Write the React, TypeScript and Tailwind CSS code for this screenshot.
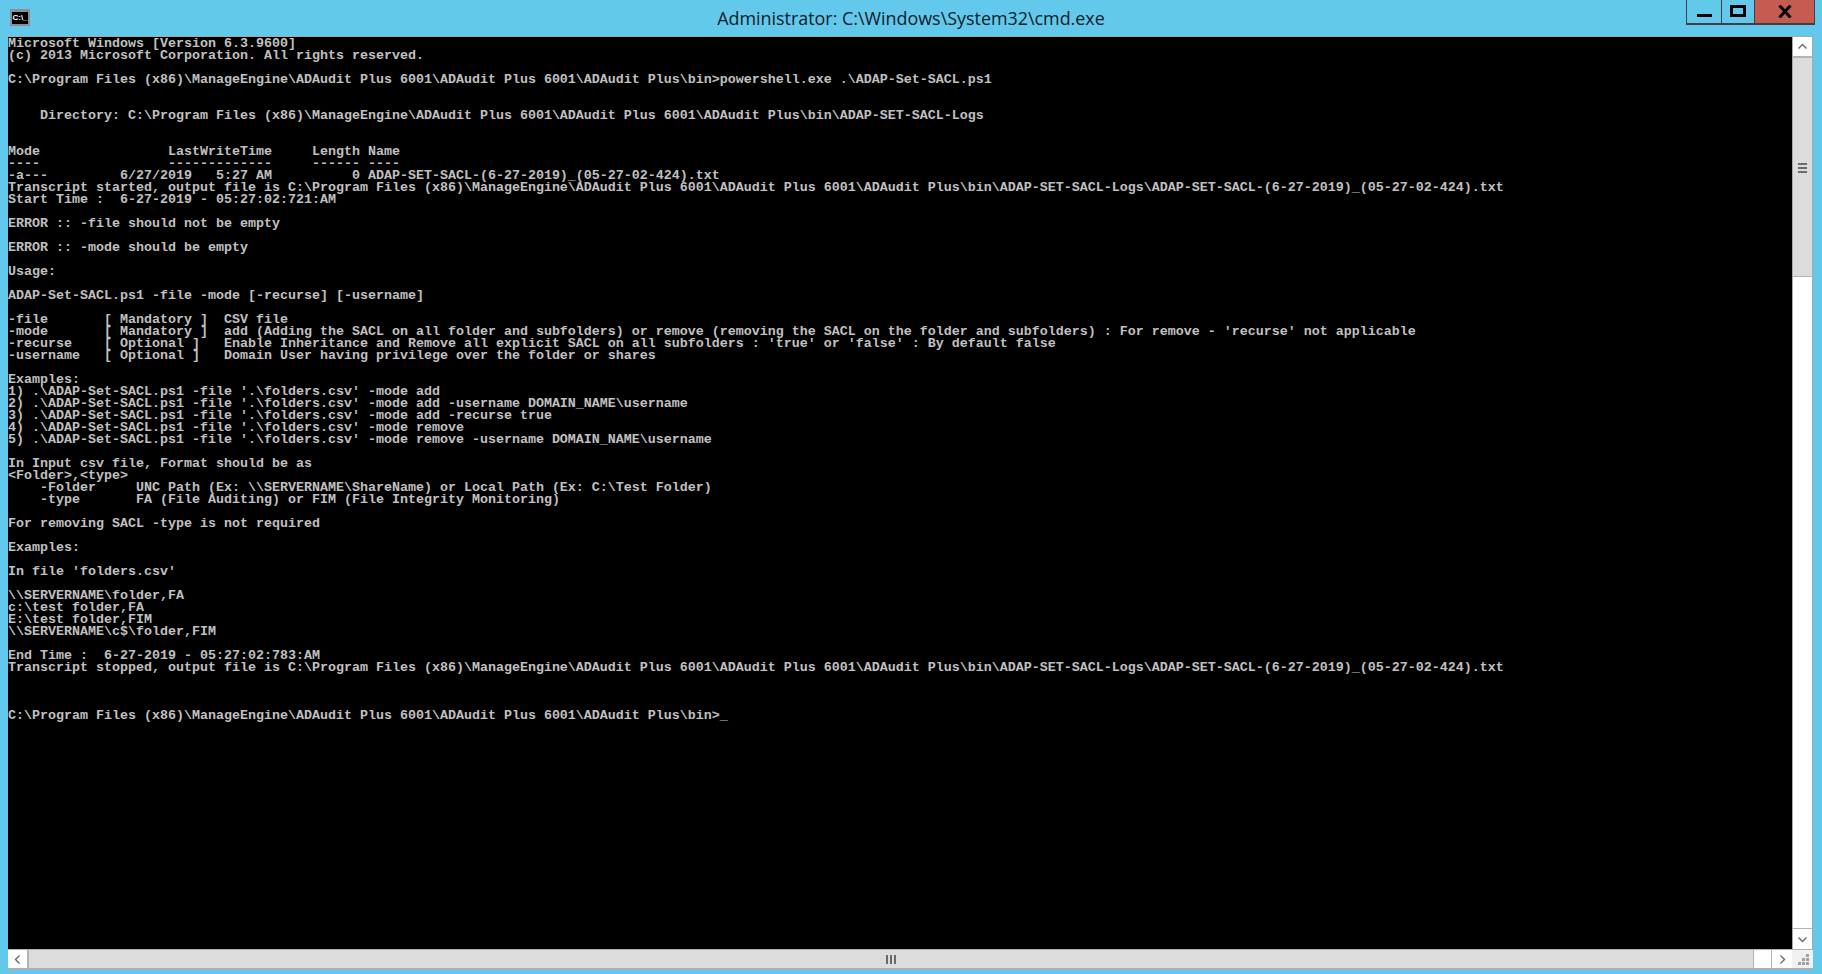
const base = "C:\\Program Files (x86)\\ManageEngine\\ADAudit Plus 6001\\ADAudit Plus 6001\\ADAudit Plus\\bin";
const logFile = "ADAP-SET-SACL-(6-27-2019)_(05-27-02-424).txt";
const ex = ".\\ADAP-Set-SACL.ps1 -file '.\\folders.csv' -mode";

const lines = [
  "Microsoft Windows [Version 6.3.9600]",
  "(c) 2013 Microsoft Corporation. All rights reserved.",
  "",
  `${base}>powershell.exe .\\ADAP-Set-SACL.ps1`,
  "",
  "",
  `    Directory: ${base}\\ADAP-SET-SACL-Logs`,
  "",
  "",
  "Mode                LastWriteTime     Length Name",
  "----                -------------     ------ ----",
  `-a---         6/27/2019   5:27 AM          0 ${logFile}`,
  `Transcript started, output file is ${base}\\ADAP-SET-SACL-Logs\\${logFile}`,
  "Start Time :  6-27-2019 - 05:27:02:721:AM",
  "",
  "ERROR :: -file should not be empty",
  "",
  "ERROR :: -mode should be empty",
  "",
  "Usage:",
  "",
  "ADAP-Set-SACL.ps1 -file -mode [-recurse] [-username]",
  "",
  "-file       [ Mandatory ]  CSV file",
  "-mode       [ Mandatory ]  add (Adding the SACL on all folder and subfolders) or remove (removing the SACL on the folder and subfolders) : For remove - 'recurse' not applicable",
  "-recurse    [ Optional ]   Enable Inheritance and Remove all explicit SACL on all subfolders : 'true' or 'false' : By default false",
  "-username   [ Optional ]   Domain User having privilege over the folder or shares",
  "",
  "Examples:",
  `1) ${ex} add`,
  `2) ${ex} add -username DOMAIN_NAME\\username`,
  `3) ${ex} add -recurse true`,
  `4) ${ex} remove`,
  `5) ${ex} remove -username DOMAIN_NAME\\username`,
  "",
  "In Input csv file, Format should be as",
  "<Folder>,<type>",
  "    -Folder     UNC Path (Ex: \\\\SERVERNAME\\ShareName) or Local Path (Ex: C:\\Test Folder)",
  "    -type       FA (File Auditing) or FIM (File Integrity Monitoring)",
  "",
  "For removing SACL -type is not required",
  "",
  "Examples:",
  "",
  "In file 'folders.csv'",
  "",
  "\\\\SERVERNAME\\folder,FA",
  "c:\\test folder,FA",
  "E:\\test folder,FIM",
  "\\\\SERVERNAME\\c$\\folder,FIM",
  "",
  "End Time :  6-27-2019 - 05:27:02:783:AM",
  `Transcript stopped, output file is ${base}\\ADAP-SET-SACL-Logs\\${logFile}`,
  "",
  "",
  "",
  `${base}>_`,
];

function Chevron({ points }: { points: string }) {
  return (
    <svg width="11" height="11" viewBox="0 0 11 11" fill="none" stroke="#6a6a6a" strokeWidth="1.4">
      <polyline points={points} />
    </svg>
  );
}

function ScrollButton({ points, className }: { points: string; className: string }) {
  return (
    <div className={`flex items-center justify-center bg-white ${className}`}>
      <Chevron points={points} />
    </div>
  );
}

function TitleBar() {
  return (
    <div className="grid h-[36px] grid-cols-[1fr_auto_1fr]">
      <div className="pl-[10px] pt-[9px]">
        <div className="h-[17px] w-[20px] border-[2px] border-t-[3px] border-[#8a8f94] bg-black text-center font-['Liberation_Sans',sans-serif] text-[8px] leading-[11px] font-bold text-white">
          C:\_
        </div>
      </div>
      <div className="pt-[3px] font-['Open_Sans',sans-serif] text-[17.9px] leading-[30px] text-[#10202a]">
        Administrator: C:\Windows\System32\cmd.exe
      </div>
      <div className="flex justify-end pr-[7px]">
        <div className="flex h-[25px] border-x-[1px] border-b-[2px] border-[#404040]">
          <div className="flex w-[35px] justify-center border-r-[1px] border-[#404040] pt-[14px]">
            <div className="h-[3px] w-[15px] bg-black" />
          </div>
          <div className="flex w-[33px] justify-center border-r-[1px] border-[#404040] pt-[5px]">
            <div className="h-[12px] w-[16px] border-[3px] border-black" />
          </div>
          <div className="flex w-[59px] justify-center bg-[#c45c51] pt-[5px]">
            <svg width="14" height="13" viewBox="0 0 14 13" stroke="black" strokeWidth="3">
              <path d="M1.5 0.5 L12.5 12.5 M12.5 0.5 L1.5 12.5" />
            </svg>
          </div>
        </div>
      </div>
    </div>
  );
}

function VerticalScrollbar() {
  return (
    <div className="flex w-[21px] flex-col border-x-[1px] border-[#a8a8a8] bg-white">
      <ScrollButton points="1.5,7.5 5.5,3.5 9.5,7.5" className="h-[21px] border-b-[2px] border-[#b4b4b4]" />
      <div className="flex h-[219px] flex-col items-center gap-[2px] border-b-[1px] border-[#b4b4b4] bg-[#dcdcdc] pt-[105px]">
        <div className="h-[2px] w-[9px] bg-[#6a6a6a]" />
        <div className="h-[2px] w-[9px] bg-[#6a6a6a]" />
        <div className="h-[2px] w-[9px] bg-[#6a6a6a]" />
      </div>
      <div className="flex-1" />
      <ScrollButton points="1.5,3.5 5.5,7.5 9.5,3.5" className="h-[21px] border-t-[1px] border-[#b4b4b4]" />
    </div>
  );
}

function HorizontalScrollbar() {
  return (
    <div className="flex h-[21px] pl-[8px] pr-[9px]">
      <div className="flex flex-1 border-y-[1px] border-b-[2px] border-[#b0b0b0] bg-white">
        <ScrollButton points="7.5,1.5 3.5,5.5 7.5,9.5" className="w-[21px] border-r-[2px] border-[#b4b4b4]" />
        <div className="flex w-[1725px] items-center justify-center gap-[2px] border-r-[1px] border-[#b4b4b4] bg-[#dcdcdc]">
          <div className="h-[9px] w-[2px] bg-[#6a6a6a]" />
          <div className="h-[9px] w-[2px] bg-[#6a6a6a]" />
          <div className="h-[9px] w-[2px] bg-[#6a6a6a]" />
        </div>
        <div className="flex-1" />
        <ScrollButton points="3.5,1.5 7.5,5.5 3.5,9.5" className="w-[21px] border-l-[1px] border-[#b4b4b4]" />
        <div className="flex w-[21px] items-end justify-end bg-[#f0f0f0] pb-[2px] pr-[4px]">
          <svg width="12" height="12" viewBox="0 0 12 12" fill="#a0a0a0">
            <rect x="9" y="0" width="3" height="3" />
            <rect x="5" y="4" width="3" height="3" />
            <rect x="9" y="4" width="3" height="3" />
            <rect x="1" y="8" width="3" height="3" />
            <rect x="5" y="8" width="3" height="3" />
            <rect x="9" y="8" width="3" height="3" />
          </svg>
        </div>
      </div>
    </div>
  );
}

export default function App() {
  return (
    <div className="flex h-[974px] w-[1822px] flex-col overflow-hidden bg-[#63c9ec]">
      <TitleBar />
      <div className="flex flex-1 pl-[8px] pr-[9px]">
        <div className="flex flex-1 border-t-[1px] border-[#a8a8a8]">
          <div className="flex-1 bg-black pt-[1px] font-['Liberation_Mono',monospace] text-[13.3333px] leading-[12px] font-bold text-[#c0c0c0]">
            {lines.map((line, i) => (
              <div key={i} className="h-[12px] whitespace-pre">
                {line}
              </div>
            ))}
          </div>
          <VerticalScrollbar />
        </div>
      </div>
      <HorizontalScrollbar />
      <div className="h-[4px]" />
    </div>
  );
}
